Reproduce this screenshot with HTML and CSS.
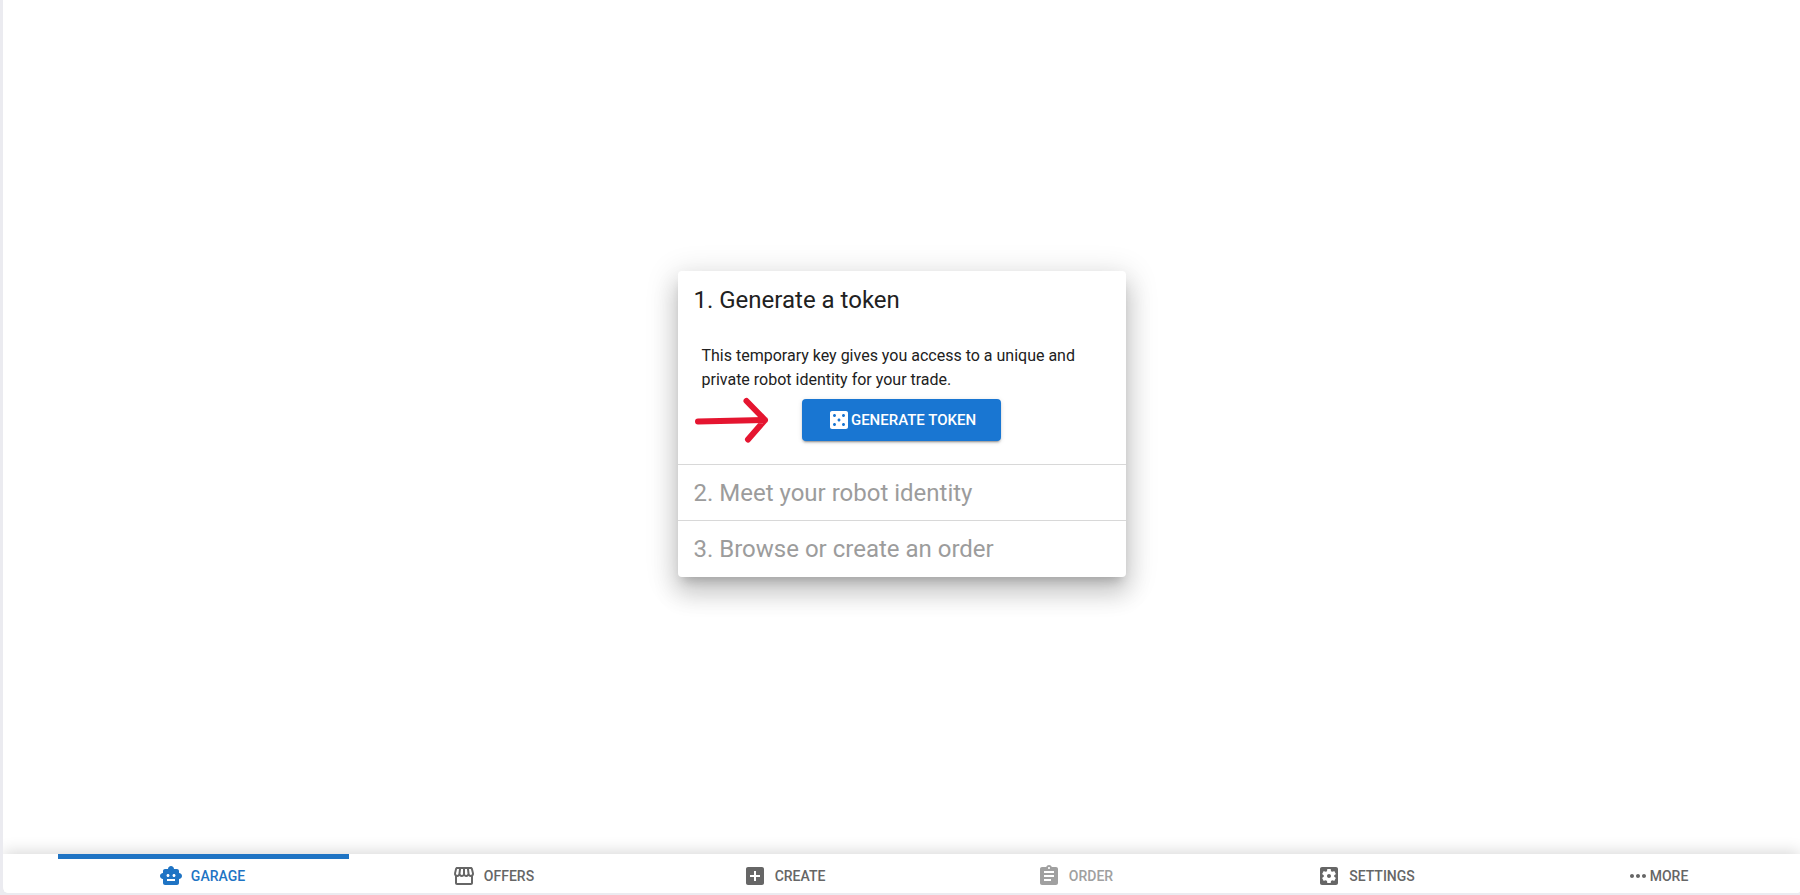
FILE: index.html
```html
<!DOCTYPE html>
<html lang="en">
<head>
<meta charset="utf-8">
<meta name="viewport" content="width=device-width, initial-scale=1">
<title>Garage</title>
<link rel="stylesheet" href="styles.css">
</head>
<body>
<div class="app">
  <main class="stage">
    <section class="card">
      <div class="step">
        <h2 class="step-title">1. Generate a token</h2>
        <div class="step-body">
          <p class="step-text">This temporary key gives you access to a unique and private robot identity for your trade.</p>
          <div class="action">
            <svg class="arrow" viewBox="0 0 76 48" aria-hidden="true"><path d="M4 25.500L71 24M52.500 5L71 24L54 43.500"/></svg>
            <button class="generate" type="button">
              <svg class="icon" viewBox="0 0 24 24" aria-hidden="true"><path d="M19 3H5c-1.100 0-2 .9-2 2v14c0 1.100.9 2 2 2h14c1.100 0 2-.9 2-2V5c0-1.100-.9-2-2-2zM7.500 18c-.83 0-1.500-.67-1.500-1.500S6.670 15 7.500 15s1.500.67 1.500 1.500S8.330 18 7.500 18zm0-9C6.670 9 6 8.330 6 7.500S6.670 6 7.500 6 9 6.670 9 7.500 8.330 9 7.500 9zm4.500 4.500c-.83 0-1.500-.67-1.500-1.500s.67-1.500 1.500-1.500 1.500.67 1.500 1.500-.67 1.500-1.500 1.500zm4.500 4.500c-.83 0-1.500-.67-1.500-1.500s.67-1.500 1.500-1.500 1.500.67 1.500 1.500-.67 1.500-1.500 1.500zm0-9c-.83 0-1.500-.67-1.500-1.500S15.670 6 16.500 6s1.500.67 1.500 1.500S17.330 9 16.500 9z"/></svg>
              <span>GENERATE TOKEN</span>
            </button>
          </div>
        </div>
      </div>
      <div class="step step-disabled"><h2 class="step-title">2. Meet your robot identity</h2></div>
      <div class="step step-disabled"><h2 class="step-title">3. Browse or create an order</h2></div>
    </section>
  </main>
  <nav class="bar" aria-label="Main">
    <div class="tabs">
      <button class="tab tab-active" type="button">
        <svg class="icon" viewBox="0 0 24 24" aria-hidden="true"><path d="M20 9V7c0-1.100-.9-2-2-2h-3c0-1.660-1.340-3-3-3S9 3.340 9 5H6c-1.100 0-2 .9-2 2v2c-1.660 0-3 1.340-3 3s1.340 3 3 3v4c0 1.100.9 2 2 2h12c1.100 0 2-.9 2-2v-4c1.660 0 3-1.340 3-3s-1.340-3-3-3zM7.500 11.500c0-.83.67-1.500 1.500-1.500s1.500.67 1.500 1.500S9.830 13 9 13s-1.500-.67-1.500-1.500zM16 17H8v-2h8v2zm-1-4c-.83 0-1.500-.67-1.500-1.500S14.170 10 15 10s1.500.67 1.500 1.500S15.830 13 15 13z"/></svg>
        <span>GARAGE</span>
      </button>
      <button class="tab" type="button">
        <svg class="icon" viewBox="0 0 24 24" aria-hidden="true"><path d="M21.900 8.890l-1.050-4.370c-.22-.9-1-1.520-1.910-1.520H5.050c-.9 0-1.690.63-1.900 1.520L2.100 8.890c-.24 1.020-.02 2.060.62 2.880.08.110.19.190.28.290V19c0 1.100.9 2 2 2h14c1.100 0 2-.9 2-2v-6.940c.09-.09.2-.18.280-.28.640-.82.870-1.870.62-2.890zm-2.990-3.900l1.050 4.370c.1.420.01.840-.25 1.170-.14.180-.44.470-.94.470-.61 0-1.140-.49-1.210-1.140L16.980 5l1.930-.01zM13 5h1.960l.54 4.520c.05.390-.07.780-.33 1.070-.22.260-.54.410-.95.410-.67 0-1.220-.59-1.220-1.310V5zM8.490 9.520L9.040 5H11v4.690c0 .72-.55 1.310-1.290 1.310-.34 0-.65-.15-.89-.41-.25-.29-.37-.68-.33-1.070zm-4.450-.16L5.050 5h1.970l-.58 4.860c-.08.650-.6 1.140-1.210 1.140-.49 0-.8-.29-.93-.47-.27-.32-.36-.75-.26-1.170zM5 19v-6.030c.08.010.15.030.23.030.87 0 1.660-.36 2.240-.95.600.6 1.400.95 2.310.95.870 0 1.650-.36 2.230-.93.590.57 1.390.93 2.290.93.840 0 1.640-.35 2.240-.95.580.59 1.370.95 2.240.95.080 0 .15-.02.23-.03V19H5z"/></svg>
        <span>OFFERS</span>
      </button>
      <button class="tab" type="button">
        <svg class="icon" viewBox="0 0 24 24" aria-hidden="true"><path d="M19 3H5c-1.110 0-2 .9-2 2v14c0 1.100.89 2 2 2h14c1.100 0 2-.9 2-2V5c0-1.100-.9-2-2-2zm-2 10h-4v4h-2v-4H7v-2h4V7h2v4h4v2z"/></svg>
        <span>CREATE</span>
      </button>
      <button class="tab" type="button" disabled>
        <svg class="icon" viewBox="0 0 24 24" aria-hidden="true"><path d="M19 3h-4.180C14.400 1.840 13.300 1 12 1c-1.300 0-2.400.84-2.820 2H5c-1.100 0-2 .9-2 2v14c0 1.100.9 2 2 2h14c1.100 0 2-.9 2-2V5c0-1.100-.9-2-2-2zm-7 0c.55 0 1 .45 1 1s-.45 1-1 1-1-.45-1-1 .45-1 1-1zm2 14H7v-2h7v2zm3-4H7v-2h10v2zm0-4H7V7h10v2z"/></svg>
        <span>ORDER</span>
      </button>
      <button class="tab" type="button">
        <svg class="icon" viewBox="0 0 24 24" aria-hidden="true"><path d="M12 10c-1.100 0-2 .9-2 2s.9 2 2 2 2-.9 2-2-.9-2-2-2zm7-7H5c-1.110 0-2 .9-2 2v14c0 1.100.89 2 2 2h14c1.110 0 2-.9 2-2V5c0-1.100-.89-2-2-2zm-1.750 9c0 .23-.02.46-.05.680l1.480 1.160c.13.110.17.300.08.450l-1.400 2.420c-.09.150-.27.210-.43.150l-1.740-.7c-.36.280-.76.510-1.180.69l-.26 1.850c-.03.170-.18.300-.35.300h-2.800c-.17 0-.32-.13-.35-.29l-.26-1.850c-.43-.18-.82-.41-1.180-.69l-1.740.7c-.16.060-.34 0-.43-.15l-1.400-2.420c-.09-.15-.05-.34.080-.45l1.480-1.160c-.03-.23-.05-.46-.05-.69 0-.23.020-.46.050-.68l-1.480-1.160c-.13-.11-.17-.3-.08-.45l1.400-2.420c.09-.15.270-.21.430-.15l1.740.7c.36-.28.760-.51 1.180-.69l.26-1.850c.03-.17.180-.3.350-.3h2.800c.17 0 .32.130.35.290l.26 1.850c.43.180.82.410 1.180.69l1.740-.7c.16-.06.340 0 .43.150l1.400 2.420c.09.150.05.340-.08.450l-1.480 1.160c.03.230.05.460.05.690z"/></svg>
        <span>SETTINGS</span>
      </button>
      <button class="tab tab-more" type="button">
        <svg class="icon" viewBox="0 0 24 24" aria-hidden="true"><path d="M6 10c-1.100 0-2 .9-2 2s.9 2 2 2 2-.9 2-2-.9-2-2-2zm12 0c-1.100 0-2 .9-2 2s.9 2 2 2 2-.9 2-2-.9-2-2-2zm-6 0c-1.100 0-2 .9-2 2s.9 2 2 2 2-.9 2-2-.9-2-2-2z"/></svg>
        <span>MORE</span>
      </button>
    </div>
  </nav>
</div>
</body>
</html>
```
FILE: styles.css
```css
* { box-sizing: border-box; }

body {
  margin: 0;
  background: #ebebf0;
  color: #212121;
  font-family: Roboto, "Liberation Sans", sans-serif;
}

.app {
  display: flex;
  flex-direction: column;
  min-height: 100vh;
  overflow: hidden;
  border-left: 3px solid #ebebf0;
  border-bottom: 2px solid #ebebf0;
  border-radius: 0 0 4px 8px;
  background: #fff;
}

.stage {
  flex: 1;
  display: flex;
  align-items: center;
  justify-content: center;
  padding-bottom: 6px;
}

.card {
  width: 448px;
  max-width: 100%;
  border-radius: 4px;
  background: #fff;
  box-shadow: 0 8px 10px -5px rgba(0, 0, 0, .2), 0 16px 24px 2px rgba(0, 0, 0, .14), 0 6px 30px 5px rgba(0, 0, 0, .12);
}

.step { padding: 0 16px; }
.step + .step { border-top: 1px solid #d8d8d8; }
.step-disabled { color: #9c9c9c; }

.step-title {
  margin: 0;
  padding: 13px 0 12px;
  font-size: 24px;
  font-weight: 400;
  line-height: 32px;
}

.step-disabled .step-title { padding: 12px 0 11px; }
.step-disabled:last-child .step-title { padding-bottom: 12px; }

.step-body { padding: 16px 0 23px; }

.step-text {
  margin: 0;
  padding: 0 8px;
  font-size: 16px;
  line-height: 24px;
}

.action {
  display: grid;
  grid-template-columns: 1fr auto 1fr;
  align-items: center;
  padding-top: 7px;
}

.arrow {
  width: 76px;
  height: 48px;
  margin: -3px 0;
  fill: none;
  stroke: #e51530;
  stroke-width: 6;
  stroke-linecap: round;
  stroke-linejoin: round;
}

.icon { fill: currentColor; flex: none; }

.generate {
  display: flex;
  align-items: center;
  justify-content: center;
  height: 42px;
  padding: 0 25px;
  border: 0;
  border-radius: 4px;
  background: #1976d2;
  color: #fff;
  font: 500 15px/26px Roboto, "Liberation Sans", sans-serif;
  box-shadow: 0 3px 1px -2px rgba(0, 0, 0, .2), 0 2px 2px rgba(0, 0, 0, .14), 0 1px 5px rgba(0, 0, 0, .12);
}

.generate .icon { width: 24px; height: 24px; }

.bar {
  padding-left: 55px;
  background: #fff;
  box-shadow: 0 -2px 16px rgba(0, 0, 0, .16);
}

.tabs {
  display: flex;
  margin-right: -4px;
}

.tab {
  flex: 1;
  display: flex;
  align-items: center;
  justify-content: center;
  gap: 8px;
  height: 39px;
  padding: 5px 3px 0 0;
  border: 0;
  background: none;
  color: #666;
  font: 500 14px/18px Roboto, "Liberation Sans", sans-serif;
}

.tab:disabled { color: #a0a0a0; }
.tab-active { color: #1f74c4; box-shadow: inset 0 5px #1f74c4; }
.tab-more { gap: 0; }
.tab .icon { width: 24px; height: 24px; }
```
